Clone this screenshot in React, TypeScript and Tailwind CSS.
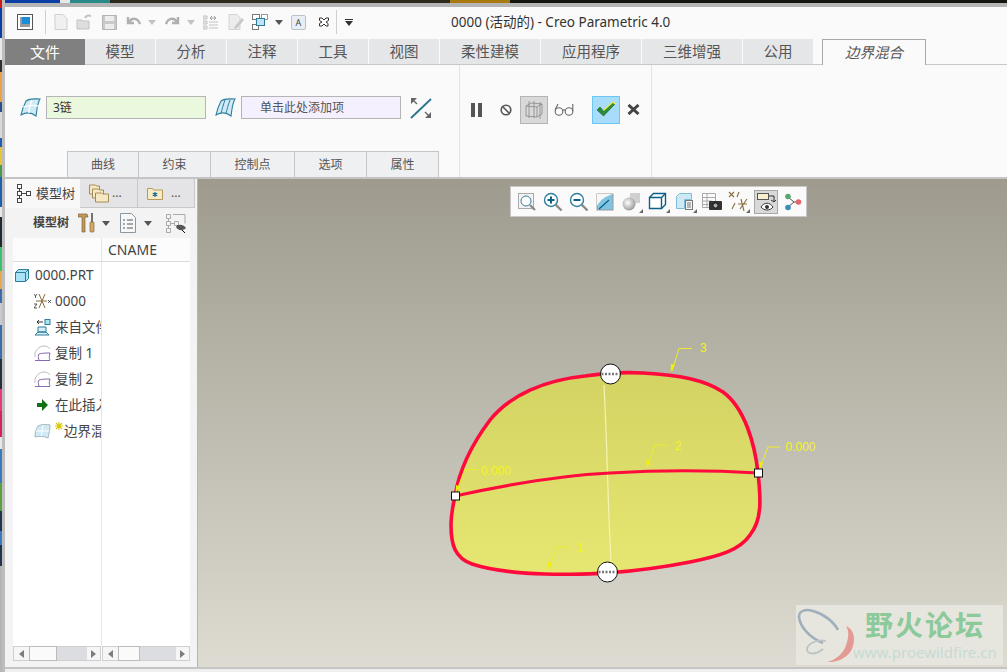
import React from 'react';

const uiFont = "font-['Noto_Sans','Noto_Sans_CJK_SC',sans-serif]";

const leftStrip = [
  'h-[8px] bg-[#d01818]', 'h-[30px] bg-[#0b3fa6]', 'h-[22px] bg-[#e8e8e8]', 'h-[12px] bg-[#30302a]', 'h-[30px] bg-[#e9a24a]', 'h-[10px] bg-[#2b4f8c]',
  'h-[26px] bg-[#d8d8d8]', 'h-[9px] bg-[#1f5fae]', 'h-[18px] bg-[#e6c53a]', 'h-[12px] bg-[#4c9a4a]', 'h-[30px] bg-[#1f5fae]', 'h-[10px] bg-[#e8e8e8]',
  'h-[30px] bg-[#202830]', 'h-[24px] bg-[#38c46a]', 'h-[18px] bg-[#e8a850]', 'h-[14px] bg-[#3a6ea8]', 'h-[22px] bg-[#c8c8d0]',
  'h-[34px] bg-[#3a6ea8]', 'h-[30px] bg-[#26303c]', 'h-[22px] bg-[#e23a7a]', 'h-[26px] bg-[#d8205a]', 'h-[12px] bg-[#e8e8e8]',
  'h-[34px] bg-[#3a78c0]', 'h-[28px] bg-[#5aa040]', 'h-[20px] bg-[#20344c]', 'h-[14px] bg-[#3a78c0]', 'h-[21px] bg-[#20344c]',
];

const tabs = [
  { label: '模型', w: 'w-[70px]' },
  { label: '分析', w: 'w-[70px]' },
  { label: '注释', w: 'w-[70px]' },
  { label: '工具', w: 'w-[70px]' },
  { label: '视图', w: 'w-[70px]' },
  { label: '柔性建模', w: 'w-[100px]' },
  { label: '应用程序', w: 'w-[100px]' },
  { label: '三维增强', w: 'w-[100px]' },
  { label: '公用', w: 'w-[70px]' },
];

const subTabs = [
  { label: '曲线', w: 'w-[72px]' },
  { label: '约束', w: 'w-[72px]' },
  { label: '控制点', w: 'w-[84px]' },
  { label: '选项', w: 'w-[72px]' },
  { label: '属性', w: 'w-[72px]' },
];

function Caret({ className = '', color = '#8a8a8a' }: { className?: string; color?: string }) {
  return (
    <svg width="8" height="5" viewBox="0 0 8 5" className={className}>
      <path d="M0 0h8L4 5z" fill={color} />
    </svg>
  );
}

function SurfaceIcon({ ribbed = false }: { ribbed?: boolean }) {
  return (
    <svg width="21" height="21" viewBox="0 0 21 21">
      <path d="M6 4 C10 1 15 2 20 2 C17 7 17 13 16 19 C11 15 6 15 1 18 C2 13 4 8 6 4z" fill="#cfeaf5" stroke="#2f7f9f" strokeWidth="1.1" />
      {ribbed ? (
        <path d="M10 3 C8 8 7 13 6 16 M15 3 C13 8 12 13 11 16" stroke="#2f7f9f" fill="none" />
      ) : (
        <path d="M3 10 C8 8 13 8 18 9 M12 3 C10 8 9 13 9 16" stroke="#ffffff" strokeWidth="1.3" fill="none" />
      )}
    </svg>
  );
}

function QuickAccess() {
  return (
    <div className="h-[32px] pb-[2px] flex items-center bg-[#fafafa]">
      <svg width="16" height="16" viewBox="0 0 16 16" className="ml-[12px]">
        <rect x="0.5" y="0.5" width="15" height="15" fill="#fff" stroke="#555" />
        <rect x="3" y="3" width="10" height="10" fill="#9a9a9a" />
        <rect x="5" y="3" width="8" height="7" fill="#1d8bd8" />
      </svg>
      <div className="ml-[12px] w-px h-[24px] bg-[#cfcfcf]" />
      <svg width="14" height="16" viewBox="0 0 14 16" className="ml-[8px]">
        <path d="M1 .5h8l4 4v11H1z" fill="#f0f0f0" stroke="#cfcfcf" />
      </svg>
      <svg width="17" height="16" viewBox="0 0 17 16" className="ml-[8px]">
        <path d="M1 15V6h5l1 1h6v8z" fill="#dedede" stroke="#c2c2c2" />
        <path d="M9 4 C10 2 12 1 15 2" stroke="#c2c2c2" strokeWidth="2" fill="none" />
      </svg>
      <svg width="15" height="15" viewBox="0 0 15 15" className="ml-[9px]">
        <path d="M.5.5h14v14H.5z" fill="#c9c9c9" stroke="#b5b5b5" />
        <rect x="3" y="1" width="9" height="5" fill="#ededed" />
        <rect x="3" y="9" width="9" height="5" fill="#ededed" />
      </svg>
      <svg width="15" height="12" viewBox="0 0 15 12" className="ml-[9px]">
        <path d="M2 1v6h6M3 6 C6 1 12 2 14 8" stroke="#b0b0b0" strokeWidth="2.4" fill="none" />
      </svg>
      <Caret className="ml-[7px]" color="#c2c2c2" />
      <svg width="15" height="12" viewBox="0 0 15 12" className="ml-[9px]">
        <path d="M13 1v6H7M12 6 C9 1 3 2 1 8" stroke="#b0b0b0" strokeWidth="2.4" fill="none" />
      </svg>
      <Caret className="ml-[7px]" color="#c2c2c2" />
      <svg width="15" height="15" viewBox="0 0 15 15" className="ml-[8px]">
        <path d="M0 1h4v3H0zM0 6h4v3H0zM0 11h4v3H0zM6 7h9M6 10h9M6 13h9" fill="#e4e4e4" stroke="#c4c4c4" />
        <path d="M7 3h6M11 1l2 2-2 2M9 1L7 3l2 2" stroke="#a0a0a0" fill="none" />
      </svg>
      <svg width="16" height="16" viewBox="0 0 16 16" className="ml-[10px]">
        <path d="M1 .5h8l3 3v12H1z" fill="#ececec" stroke="#d4d4d4" />
        <path d="M7 12 L14 4l2 2-7 8-3 1z" fill="#c8c8c8" />
      </svg>
      <svg width="16" height="16" viewBox="0 0 16 16" className="ml-[8px]">
        <rect x="0.5" y="0.5" width="7" height="5" fill="#fff" stroke="#777" />
        <rect x="9.5" y="0.5" width="6" height="5" fill="#fff" stroke="#999" />
        <rect x="0.5" y="10.5" width="6" height="5" fill="#fff" stroke="#777" />
        <rect x="4.5" y="4.5" width="8" height="7" fill="#bfe3f2" stroke="#2d7d9a" />
      </svg>
      <Caret className="ml-[7px]" color="#555" />
      <div className="ml-[8px] w-[15px] h-[15px] rounded-[2px] border border-[#b9c2c9] bg-[#e8eff4] flex items-center justify-center text-[9px] leading-none text-[#444]">A</div>
      <svg width="12" height="10" viewBox="0 0 12 10" className="ml-[12px]">
        <path d="M1.5 1h2.5l2 2 2-2h2.5v2.5L8 5l2 1.5V9H8L6 7 4 9H1.5V6.5L4 5 1.5 3.5z" fill="#fff" stroke="#333" />
      </svg>
      <div className="ml-[6px] w-px h-[24px] bg-[#cfcfcf]" />
      <svg width="8" height="7" viewBox="0 0 8 7" className="ml-[8px]">
        <path d="M0 0h8v1H0zM0 2h8L4 7z" fill="#333" />
      </svg>
      <span className="ml-[98px] text-[13.5px] text-[#333] whitespace-nowrap">0000 (活动的) - Creo Parametric 4.0</span>
    </div>
  );
}

function TabRow() {
  return (
    <div className="h-[26px] flex bg-[#fafafa] border-b border-[#c8c8c8]">
      <div className="w-[80px] h-[26px] bg-[#808080] text-white text-[15px] flex items-center justify-center">文件</div>
      {tabs.map((t) => (
        <div key={t.label} className={`${t.w} h-[25px] mr-px bg-[#e5e6e8] text-[#555] text-[14.5px] flex items-center justify-center`}>
          {t.label}
        </div>
      ))}
      <div className="ml-[8px] w-[104px] h-[26px] bg-[#fafafa] border-t border-x border-[#a8a8a8] italic text-[#555] text-[14.5px] flex items-center justify-center">
        边界混合
      </div>
    </div>
  );
}

function Ribbon() {
  return (
    <div className="h-[112px] flex bg-[#fafafa]">
      <div className="w-[455px] border-r border-[#e2e2e2] flex flex-col">
        <div className="mt-[31px] h-[23px] flex items-center">
          <div className="ml-[15px]"><SurfaceIcon /></div>
          <div className="ml-[5px] w-[160px] h-[23px] bg-[#eaf9de] border border-[#b5b5b5] pl-[6px] text-[12px] leading-[21px] text-[#333]">3链</div>
          <div className="ml-[9px]"><SurfaceIcon ribbed /></div>
          <div className="ml-[5px] w-[160px] h-[23px] bg-[#f4f0fe] border border-[#b5b5b5] pl-[18px] text-[12px] leading-[21px] text-[#555]">单击此处添加项</div>
          <svg width="22" height="22" viewBox="0 0 22 22" className="ml-[9px]">
            <path d="M1 21 L21 2" stroke="#2b7390" strokeWidth="1.8" />
            <path d="M1 1h6L1 7z M21 21h-6l6-6z" fill="#666" />
            <path d="M3 3l4 4M19 19l-4-4" stroke="#666" strokeWidth="1.4" />
          </svg>
        </div>
        <div className="mt-auto ml-[62px] flex h-[26px]">
          {subTabs.map((t) => (
            <div key={t.label} className={`${t.w} bg-[#eff0f2] border-t border-r border-[#c6c6c6] first:border-l text-[12px] text-[#555] flex items-center justify-center`}>
              {t.label}
            </div>
          ))}
        </div>
      </div>
      <div className="w-[192px] border-r border-[#e2e2e2] h-full">
        <div className="mt-[31px] h-[27px] flex items-center">
          <div className="ml-[11px] flex gap-[3px]">
            <div className="w-[4px] h-[14px] bg-[#555]" />
            <div className="w-[4px] h-[14px] bg-[#555]" />
          </div>
          <svg width="12" height="12" viewBox="0 0 12 12" className="ml-[18px]">
            <circle cx="6" cy="6" r="4.8" fill="none" stroke="#555" strokeWidth="1.6" />
            <path d="M2.8 2.8l6.4 6.4" stroke="#555" strokeWidth="1.6" />
          </svg>
          <div className="ml-[8px] w-[28px] h-[28px] bg-[#d9d9d9] border border-[#b4b4b4] flex items-center justify-center">
            <svg width="20" height="20" viewBox="0 0 20 20" fill="none" stroke="#888" strokeWidth="0.8">
              <path d="M2 6l5-3 11 1v10l-5 3-11-1zM2 6l11 1 5-3M13 7v10M5 1v17M10 1v17M16 2v17" />
            </svg>
          </div>
          <svg width="20" height="13" viewBox="0 0 20 13" className="ml-[6px]" fill="none" stroke="#666" strokeWidth="1.1">
            <circle cx="5" cy="8.5" r="3.8" />
            <circle cx="15" cy="8.5" r="3.8" />
            <path d="M8.5 7.5c1-1 2-1 3 0M1 7L4 1M18.8 8V1" />
          </svg>
          <div className="ml-[18px] w-[28px] h-[28px] bg-[#a8dcfb] border border-[#6cc5f5] flex items-center justify-center">
            <svg width="20" height="17" viewBox="0 0 20 17">
              <path d="M1 9l3-3 3.5 4L17 1l2 2L7.5 15z" fill="#2a8a3e" stroke="#1c5a28" strokeWidth="0.6" />
              <path d="M7.5 9.5L17 1l2 2" stroke="#f2ea3a" strokeWidth="1.2" fill="none" />
            </svg>
          </div>
          <svg width="13" height="11" viewBox="0 0 13 11" className="ml-[7px]">
            <path d="M1.5 1l10 9M11.5 1l-10 9" stroke="#444" strokeWidth="3" />
          </svg>
        </div>
      </div>
      <div className="flex-1" />
    </div>
  );
}

function ModelTreeIcon() {
  return (
    <svg width="15" height="19" viewBox="0 0 15 19" fill="#fff" stroke="#444">
      <rect x="1.5" y="0.5" width="4" height="4" />
      <rect x="1.5" y="7.5" width="4" height="4" />
      <rect x="1.5" y="14.5" width="4" height="4" />
      <rect x="10.5" y="7.5" width="4" height="4" />
      <path d="M3.5 4.5v3M3.5 11.5v3M5.5 9.5h5" fill="none" />
    </svg>
  );
}

function FolderIcon({ star = false }: { star?: boolean }) {
  if (star) {
    return (
      <svg width="16" height="14" viewBox="0 0 16 14">
        <path d="M.5 2.5h5l1 1.5h9v9.5H.5z" fill="#f8ecc8" stroke="#b79a5a" />
        <path d="M8 6v5M5.8 7.2l4.4 2.6M10.2 7.2L5.8 9.8" stroke="#0d5f86" strokeWidth="1.1" />
      </svg>
    );
  }
  return (
    <svg width="20" height="19" viewBox="0 0 20 19" stroke="#a68c54" fill="#f6e8c4">
      <path d="M.5 1h6l1 1h3v8H.5z" />
      <path d="M3.5 5h6l1 1h4v8h-11z" />
      <path d="M6.5 9h6l1 1h6v8h-13z" />
    </svg>
  );
}

function FeatureCurveIcon() {
  return (
    <svg width="17" height="16" viewBox="0 0 17 16" fill="none">
      <path d="M1 12 V8 C3 3 7 1 10 1 C12 1 15 2 16 4" stroke="#bdbdbd" />
      <path d="M5 15 C4 12 4 10 5 9 C8 8 12 8 16 8 C15 11 15 13 16 15 M1 15.5h15" stroke="#8a68b4" />
    </svg>
  );
}

function TreeRow({ icon, text, root = false }: { icon: React.ReactNode; text: React.ReactNode; root?: boolean }) {
  return (
    <div className={`h-[26px] flex items-center whitespace-nowrap overflow-hidden text-[13.5px] text-[#444] ${root ? 'pl-[2px]' : 'pl-[21px]'}`}>
      <span className={`shrink-0 flex items-center ${root ? 'w-[20px]' : 'w-[21px]'}`}>{icon}</span>
      {text}
    </div>
  );
}

function HScrollbar({ wide = false }: { wide?: boolean }) {
  return (
    <div className="flex-1 h-[15px] border border-[#cfcfd2] bg-[#dcdde0] flex items-center justify-between">
      <div className="flex h-full">
        <div className="w-[15px] bg-[#f6f6f6] flex items-center justify-center">
          <svg width="5" height="8" viewBox="0 0 5 8"><path d="M5 0v8L0 4z" fill="#7d7d7d" /></svg>
        </div>
        <div className={`${wide ? 'w-[28px]' : 'w-[22px]'} bg-[#fafafa] border border-[#bbb] h-[15px] -mt-px`} />
      </div>
      <div className="w-[13px] h-full bg-[#f6f6f6] flex items-center justify-center">
        <svg width="5" height="8" viewBox="0 0 5 8"><path d="M0 0v8l5-4z" fill="#7d7d7d" /></svg>
      </div>
    </div>
  );
}

function ModelTreePanel() {
  return (
    <div className="w-[193px] shrink-0 bg-[#f3f3f3] border-r border-[#b4b4b4] flex flex-col">
      <div className="h-[29px] flex">
        <div className="w-[75px] flex items-center pl-[11px] bg-[#f8f8f8] text-[13px] text-[#444]">
          <ModelTreeIcon />
          <span className="ml-[5px]">模型树</span>
        </div>
        <div className="w-[58px] bg-[#e4e4e6] border-b border-r border-[#c8c8c8] flex items-center pl-[9px] text-[12px] text-[#555]">
          <FolderIcon />
          <span className="ml-[3px]">...</span>
        </div>
        <div className="w-[57px] bg-[#e4e4e6] border-b border-r border-[#c8c8c8] flex items-center pl-[9px] text-[12px] text-[#555]">
          <FolderIcon star />
          <span className="ml-[8px]">...</span>
        </div>
      </div>
      <div className="h-[30px] flex items-center">
        <span className="ml-[28px] text-[12px] font-bold text-[#444]">模型树</span>
        <svg width="18" height="20" viewBox="0 0 18 20" className="ml-[9px]">
          <path d="M0 1h9l1 3H7v15H4V4H0z" fill="#c49a58" stroke="#6a5530" strokeWidth="0.6" />
          <path d="M14 0v9" stroke="#555" strokeWidth="1.6" />
          <rect x="12" y="9" width="4" height="10" rx="1" fill="#d8a860" stroke="#6a5530" strokeWidth="0.6" />
        </svg>
        <Caret className="ml-[6px]" color="#555" />
        <svg width="16" height="20" viewBox="0 0 16 20" className="ml-[10px]">
          <path d="M.5.5h11l4 4v15H.5z" fill="#f5f7f9" stroke="#8b98a3" />
          <path d="M3 7h2M7 7h6M3 11h2M7 11h6M3 15h2M7 15h6" stroke="#555" />
        </svg>
        <Caret className="ml-[8px]" color="#555" />
        <svg width="21" height="19" viewBox="0 0 21 19" className="ml-[14px]" fill="none">
          <path d="M.5.5h4v4h-4zM.5 7.5h4v4h-4zM.5 14.5h4v4h-4zM8.5 7.5h4v4h-4zM2.5 4.5v3M2.5 11.5v3M4.5 9.5h4M7 .5h12v9" stroke="#aaa" />
          <path d="M11 11l8 8" stroke="#111" />
          <path d="M10 13 C12 10 17 10 20 14 C17 17 12 17 10 13z" fill="#555" />
        </svg>
      </div>
      <div className="flex-1 ml-[8px] mr-[7px] mb-[6px] bg-white flex flex-col min-h-0">
        <div className="h-[24px] flex border-b border-[#dcdcdc] shrink-0 bg-[#fcfcfc]">
          <div className="w-[89px] border-r border-[#e6e6e6]" />
          <span className="pl-[6px] text-[14px] leading-[24px] text-[#444]">CNAME</span>
        </div>
        <div className="flex-1 flex min-h-0">
          <div className="w-[89px] border-r border-[#e6e6e6] overflow-hidden">
            <TreeRow
              root
              text="0000.PRT"
              icon={
                <svg width="14" height="13" viewBox="0 0 14 13">
                  <path d="M.5 3.5l3-3h10v9l-3 3H.5z" fill="#a9e2f5" stroke="#2d7d9a" />
                  <path d="M.5 3.5h10v9M10.5 3.5l3-3" fill="none" stroke="#2d7d9a" />
                </svg>
              }
            />
            <TreeRow
              text="0000"
              icon={
                <svg width="17" height="16" viewBox="0 0 17 16" fill="none">
                  <path d="M5 1l6 14M11 1L5 15M2 8h11" stroke="#8a6d3e" />
                  <path d="M0 1l1.5 2L3 1M1.5 3v2M0 11h3l-3 4h3M14 7l3 3M17 7l-3 3" stroke="#333" strokeWidth="0.8" />
                </svg>
              }
            />
            <TreeRow
              text="来自文件"
              icon={
                <svg width="17" height="17" viewBox="0 0 17 17" fill="none">
                  <rect x="11" y="0.5" width="5" height="5" fill="#a9e2f5" stroke="#2d7d9a" />
                  <path d="M4 8h8v5H4zM1 16l3-3h8l3 3z" fill="#d8eef7" stroke="#2d7d9a" />
                  <path d="M9 3H3M5 1L3 3l2 2" stroke="#333" />
                </svg>
              }
            />
            <TreeRow text="复制 1" icon={<FeatureCurveIcon />} />
            <TreeRow text="复制 2" icon={<FeatureCurveIcon />} />
            <TreeRow
              text="在此插入"
              icon={
                <svg width="17" height="12" viewBox="0 0 17 12">
                  <path d="M3 4h5V0l6 6-6 6V8H3z" fill="#127012" />
                </svg>
              }
            />
            <TreeRow
              text={
                <span className="flex">
                  <svg width="8" height="8" viewBox="0 0 8 8" className="mt-[1px] mr-[1px]">
                    <path d="M4 0v8M0 4h8M1 1l6 6M7 1L1 7" stroke="#d8c800" strokeWidth="1.1" />
                  </svg>
                  边界混合
                </span>
              }
              icon={
                <svg width="17" height="15" viewBox="0 0 17 15">
                  <path d="M4 2 C8 0 13 0 16 1 C16 5 15 10 14 14 C10 12 5 12 1 13 C1 9 2 5 4 2z" fill="#cfeaf5" stroke="#a8b8c0" />
                  <path d="M9 1 C8 5 8 9 7 12 M2 7h13" stroke="#fff" fill="none" />
                </svg>
              }
            />
          </div>
          <div className="flex-1" />
        </div>
        <div className="flex h-[15px] shrink-0 gap-px">
          <HScrollbar wide />
          <HScrollbar />
        </div>
      </div>
    </div>
  );
}

function Corner() {
  return <path d="M22 22h-4l4-4z" fill="#666" />;
}

function ViewToolbar() {
  return (
    <div className="absolute left-[312px] top-[7px] w-[297px] h-[31px] bg-[#fafafa] border border-[#c8c8c8] flex items-center pl-[6px]">
      <svg width="20" height="20" viewBox="0 0 20 20" fill="none">
        <rect x="1.5" y="1.5" width="15" height="15" fill="#f4f4f4" stroke="#aaa" />
        <circle cx="9" cy="9" r="5" stroke="#2f7f9f" fill="#fff" />
        <path d="M13 13l5 5" stroke="#888" strokeWidth="2.2" />
      </svg>
      <svg width="20" height="20" viewBox="0 0 20 20" fill="none" className="ml-[6px]">
        <circle cx="8" cy="8" r="6.5" stroke="#2f7f9f" strokeWidth="1.4" fill="#fff" />
        <path d="M4.5 8h7M8 4.5v7" stroke="#0d5f86" strokeWidth="2" />
        <path d="M12.5 12.5l6 6" stroke="#888" strokeWidth="2.4" />
      </svg>
      <svg width="20" height="20" viewBox="0 0 20 20" fill="none" className="ml-[6px]">
        <circle cx="8" cy="8" r="6.5" stroke="#2f7f9f" strokeWidth="1.4" fill="#fff" />
        <path d="M4.5 8h7" stroke="#0d5f86" strokeWidth="2" />
        <path d="M12.5 12.5l6 6" stroke="#888" strokeWidth="2.4" />
      </svg>
      <svg width="18" height="18" viewBox="0 0 18 18" className="ml-[7px]">
        <rect x="1" y="1" width="16" height="16" fill="#7fc4e0" stroke="#999" />
        <path d="M1 13 C4 7 10 3 17 1 H1z" fill="#f7f7f7" />
        <path d="M3 16L13 7" stroke="#0d5f86" strokeWidth="1.2" />
      </svg>
      <svg width="22" height="22" viewBox="0 0 22 22" className="ml-[7px]">
        <defs>
          <radialGradient id="sph" cx="0.4" cy="0.4" r="0.7">
            <stop offset="0" stopColor="#ffffff" />
            <stop offset="1" stopColor="#8d8d8d" />
          </radialGradient>
        </defs>
        <rect x="9" y="2" width="10" height="10" fill="#d0d0d0" />
        <circle cx="8" cy="13" r="6.5" fill="url(#sph)" />
        <Corner />
      </svg>
      <svg width="22" height="22" viewBox="0 0 22 22" fill="none" className="ml-[5px]">
        <path d="M1.5 6.5l4-4h12v11l-4 4h-12z" stroke="#0d5f86" strokeWidth="1.4" fill="#fff" />
        <path d="M1.5 6.5h12v11M13.5 6.5l4-4" stroke="#0d5f86" strokeWidth="1.4" />
        <Corner />
      </svg>
      <svg width="22" height="22" viewBox="0 0 22 22" className="ml-[5px]" fill="none">
        <path d="M1.5 5.5l3-3h12v6h-7v9h-8z" fill="#cfe9f4" stroke="#7cbcd6" />
        <rect x="10.5" y="9.5" width="7" height="9" fill="#f4f4f4" stroke="#777" />
        <path d="M12 12h4M12 14h4M12 16h4" stroke="#777" />
        <Corner />
      </svg>
      <svg width="20" height="20" viewBox="0 0 20 20" className="ml-[5px]" fill="none">
        <path d="M.5 1.5h13v14H.5zM.5 5.5h13M.5 9h9M.5 12.5h6M5 1.5v14" stroke="#aaa" />
        <rect x="7" y="9" width="13" height="9" rx="1" fill="#333" />
        <circle cx="13.5" cy="13.5" r="2.6" fill="#aaa" stroke="#111" />
      </svg>
      <svg width="22" height="22" viewBox="0 0 22 22" className="ml-[6px]" fill="none">
        <path d="M1 1l5 5M6 1L1 6M11 1l-2 5M4 18l3-6M13 8l3 12M10 13h9M19 8l-7 10" stroke="#8a6d3e" strokeWidth="1.1" />
        <Corner />
      </svg>
      <div className="ml-[4px] w-[24px] h-[24px] bg-[#d9d9d9] border border-[#a8a8a8] flex items-center justify-center">
        <svg width="20" height="20" viewBox="0 0 20 20" fill="none">
          <rect x="1.5" y="1.5" width="11" height="6" fill="#f8efcf" stroke="#555" />
          <path d="M13 4h5v6M18 10l-3-2M18 10l2-2" stroke="#333" />
          <path d="M5 15 C8 10 14 10 17 15 C14 19 8 19 5 15z" fill="#fff" stroke="#333" />
          <circle cx="11" cy="15" r="2" fill="#333" />
        </svg>
      </div>
      <svg width="18" height="18" viewBox="0 0 18 18" className="ml-[6px]" fill="none">
        <path d="M4 4l6 5-6 5M10 9h4" stroke="#555" />
        <circle cx="4" cy="3.5" r="2.8" fill="#58a868" />
        <circle cx="4" cy="14.5" r="2.8" fill="#3b8cb8" />
        <circle cx="14.5" cy="9" r="2.8" fill="#e0686c" />
      </svg>
    </div>
  );
}

function Leader({ d, tip }: { d: string; tip: string }) {
  return (
    <g>
      <path d={d} stroke="#ecec2a" strokeWidth="1" fill="none" />
      <polygon points={tip} fill="#f2f200" />
    </g>
  );
}

function Handle({ cx, cy }: { cx: number; cy: number }) {
  return (
    <g>
      <circle cx={cx} cy={cy} r="10" fill="#fff" stroke="#111" strokeWidth="1" />
      <path d={`M${cx - 9} ${cy}h18`} stroke="#777" strokeWidth="2.4" strokeDasharray="2 1.5" />
    </g>
  );
}

// surface, boundary curves and the yellow dimension labels
function ModelDrawing() {
  return (
    <svg viewBox="198 179 809 488" width="809" height="488" className="absolute left-0 top-0">
      <defs>
        <linearGradient id="surf" x1="0" y1="0" x2="0" y2="1">
          <stop offset="0" stopColor="#d3d363" />
          <stop offset="1" stopColor="#e6e672" />
        </linearGradient>
      </defs>
      <path
        d="M455 496 C460 465 475 440 490 420 C510 395 545 380 585 376 C605 373 625 372 643 373 C680 375 705 380 723 392 C745 408 755 445 758 473 C761 500 762 520 750 535 C740 550 720 556 690 562 C660 568 635 571 607 573 C585 574 570 575 545 574 C515 573 490 570 472 564 C455 558 451 545 451 525 C451 515 453 505 455 496 Z"
        fill="url(#surf)"
        stroke="#ff0a3c"
        strokeWidth="3.6"
      />
      <path d="M604 385 C607 440 608 510 611 562" stroke="#f4f4b4" strokeWidth="1.2" fill="none" />
      <path d="M455 496 C510 484 570 475 610 473 C660 470 710 470 758 473" stroke="#ff0a3c" strokeWidth="3.2" fill="none" />
      <Leader d="M672 371 L679 348.5 H692" tip="670.5,372 671,364 675,365" />
      <Leader d="M648 466 L655 445 H667" tip="647.5,468 646,460 650,461" />
      <Leader d="M549 568 L557 547 H569" tip="548.5,570 548,562 552,563" />
      <Leader d="M456 492 L465 469.5 H477" tip="455.5,493 456,485 460,487" />
      <Leader d="M760 468 L768 447 H780" tip="759.5,470 759,462 763,463" />
      <g fill="#f4f420" fontSize="12" fontFamily="'Liberation Sans', sans-serif">
        <text x="700" y="352">3</text>
        <text x="675" y="450">2</text>
        <text x="577" y="552">1</text>
        <text x="481" y="475">0.000</text>
        <text x="785.5" y="451">0.000</text>
      </g>
      <Handle cx={610.5} cy={374} />
      <Handle cx={607.5} cy={572} />
      <rect x="451.5" y="492" width="8" height="8" fill="#fff" stroke="#111" />
      <rect x="754.5" y="469" width="8" height="8" fill="#fff" stroke="#111" />
    </svg>
  );
}

function Watermark() {
  return (
    <div className="absolute left-[598px] top-[426px] w-[207px] h-[60px] bg-[#e7e6de] flex">
      <svg width="60" height="60" viewBox="0 0 60 60" className="shrink-0" fill="none">
        <path d="M27 38 C14 33 4 22 3 12 C3 5 10 4 17 6 C28 9 38 17 42 25" stroke="#9fb0ba" strokeWidth="2.6" />
        <path d="M50 21 C58 24 60 34 56 44 C52 52 42 58 31 57 C40 55 48 48 50 40 C53 32 53 26 50 21z" fill="#e39a94" />
        <path d="M30 36 C22 34 12 38 11 44 C11 50 20 50 27 44" stroke="#bcc4c6" strokeWidth="1.8" />
      </svg>
      <div className="flex flex-col">
        <span className="ml-[9px] mt-[3px] text-[28px] leading-[34px] font-bold tracking-[2px] text-[#8cc99b] whitespace-nowrap">野火论坛</span>
        <span className="-ml-[3px] text-[15px] leading-[20px] text-[#c6dad3] whitespace-nowrap">www.proewildfire.cn</span>
      </div>
    </div>
  );
}

export default function App() {
  return (
    <div className={`w-[1007px] h-[672px] overflow-hidden flex bg-[#b5b5b5] ${uiFont}`}>
      <div className="w-[2px] shrink-0 flex flex-col">
        {leftStrip.map((c, i) => (
          <div key={i} className={c} />
        ))}
      </div>
      <div className="w-[3px] shrink-0 bg-[#bdbdbd]" />
      <div className="flex-1 flex flex-col min-w-0">
        <div className="h-[3px] flex shrink-0">
          <div className="w-[55px] bg-[#0b3fa6]" />
          <div className="w-[10px] bg-[#e8e8e8]" />
          <div className="w-[40px] bg-[#2a8a8a]" />
          <div className="w-[340px] bg-[#2c2a1c]" />
          <div className="w-[60px] bg-[#a87a10]" />
          <div className="flex-1 bg-[#141410]" />
        </div>
        <div className="h-[4px] shrink-0 bg-[#b5b5b5]" />
        <QuickAccess />
        <TabRow />
        <Ribbon />
        <div className="h-[2px] shrink-0 bg-[#c4c4c4]" />
        <div className="h-[488px] flex shrink-0">
          <ModelTreePanel />
          <div className="relative flex-1 bg-gradient-to-b from-[#9e9b8e] to-[#dedcd2] overflow-hidden">
            <ViewToolbar />
            <ModelDrawing />
            <Watermark />
          </div>
        </div>
        <div className="h-[2px] shrink-0 bg-[#c4c4c4]" />
        <div className="flex-1 bg-[#efefef]" />
      </div>
    </div>
  );
}
